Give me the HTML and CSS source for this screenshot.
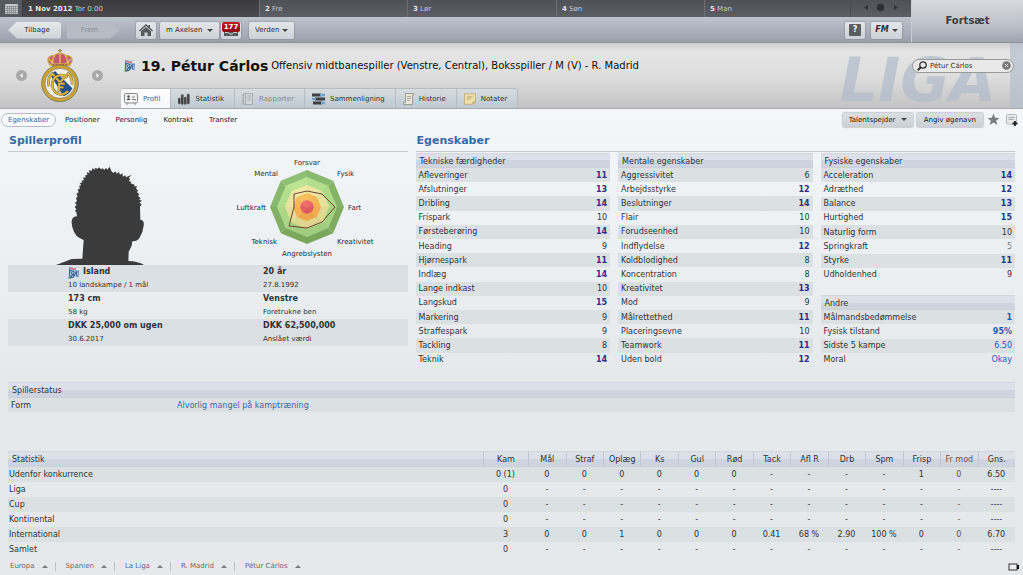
FILE: index.html
```html
<!DOCTYPE html>
<html lang="da">
<head>
    <meta charset="UTF-8">
    <meta name="viewport" content="width=device-width, initial-scale=1.0">
    <title>Pétur Cárlos - Profil</title>
    <link rel="stylesheet" href="styles.css">
</head>
<body>

    <header class="top">
        <div class="days">
            <button class="calendar" aria-label="Kalender">
                <svg width="13" height="10" viewBox="0 0 13 10"><rect width="13" height="10" rx="1" fill="#c3c5c7"/><path d="M0 2.5h13M0 4.5h13M0 6.5h13M0 8.5h13M2.5 2v8M4.5 2v8M6.5 2v8M8.5 2v8M10.5 2v8" stroke="#777a7e" stroke-width=".6"/></svg>
            </button>
            <div class="day today"><b>1 Nov 2012</b> Tor 0:00</div>
            <div class="day"><b>2</b> Fre</div>
            <div class="day"><b>3</b> Lør</div>
            <div class="day"><b>4</b> Søn</div>
            <div class="day"><b>5</b> Man</div>
            <div class="day-nav">
                <svg width="36" height="9" viewBox="0 0 36 9" fill="#2e3033"><path d="M5 2v5L1 4.500z"/><circle cx="17.500" cy="4.500" r="3.700"/><path d="M31 2v5l4-2.500z"/></svg>
            </div>
        </div>
        <nav class="toolbar">
            <button class="arrow-btn back">Tilbage</button>
            <button class="arrow-btn forward" disabled>Frem</button>
            <button class="btn square home" aria-label="Hjem">
                <svg width="14" height="12" viewBox="0 0 14 12"><path d="M7 0l2.500 2.300V1H11v2.700L14 6.500l-.9.9L7 2 .9 7.400 0 6.500z" fill="#55585c"/><path d="M7 3l5 4.300V12H8.500V8.500h-3V12H2V7.300z" fill="#55585c"/></svg>
            </button>
            <label class="dropdown manager"><select aria-label="Manager"><option>m Axelsen</option></select></label>
            <button class="btn square inbox" aria-label="Indbakke">
                <svg width="14" height="12" viewBox="0 0 14 12"><path d="M0 6l2-4h10l2 4v6H0z" fill="#55585c"/><path d="M1 8.500h3.500l1 1.500h3l1-1.500H13" stroke="#c8cdd2" fill="none"/></svg>
                <span class="badge">177</span>
            </button>
            <label class="dropdown world"><select aria-label="Verden"><option>Verden</option></select></label>
            <button class="btn square help" aria-label="Hjælp"><span>?</span></button>
            <button class="btn fm" aria-label="FM menu"><i>FM</i><span class="caret"></span></button>
        </nav>
        <button class="continue">Fortsæt</button>
    </header>

    <section class="player">
        <div class="watermark" aria-hidden="true">LIGA</div>
        <div class="club">
            <button class="round" aria-label="Forrige"><svg width="11" height="11" viewBox="0 0 11 11"><circle cx="5.500" cy="5.500" r="5.500" fill="#a9a9a9"/><path d="M6.700 3v5L3.700 5.500z" fill="#eee"/></svg></button>
            <svg class="crest" width="38" height="53" viewBox="0 0 114 159">
                <path d="M57 0v12M51 5h12" stroke="#a08a48" stroke-width="4"/>
                <path d="M28 49C14 30 23 18 41 20c4-9 28-9 32 0 18-2 27 10 13 29z" fill="#c4586b" stroke="#c9a84a" stroke-width="4"/>
                <path d="M57 13v34M41 20q-10 12-3 28M73 20q10 12 3 28M24 30q8 3 9 14M90 30q-8 3-9 14" stroke="#dfbf6a" stroke-width="4" fill="none"/>
                <rect x="27" y="43" width="60" height="8" rx="3" fill="#c9a84a"/><path d="M34 47h46" stroke="#a8445a" stroke-width="4" stroke-dasharray="5 5"/>
                <circle cx="57" cy="103" r="55" fill="#c9a336" stroke="#696348" stroke-width="2"/>
                <circle cx="57" cy="103" r="45" fill="#f2f0e7" stroke="#7d7347" stroke-width="2"/>
                <path d="M28 78l14-12 52 52q-8 18-26 24z" fill="#23508e"/>
                <path d="M24 112q-6-26 10-38l23 26 24-26q14 10 12 34" fill="none" stroke="#6b5725" stroke-width="8"/>
                <path d="M24 112q-6-26 10-38l23 26 24-26q14 10 12 34" fill="none" stroke="#e2bd4c" stroke-width="5.500"/>
                <path d="M79 86a27 29 0 1 0 2 40" fill="none" stroke="#6b5725" stroke-width="8"/>
                <path d="M79 86a27 29 0 1 0 2 40" fill="none" stroke="#e2bd4c" stroke-width="5.500"/>
                <path d="M54 128V104h17M54 115h13" fill="none" stroke="#6b5725" stroke-width="8"/>
                <path d="M54 128V104h17M54 115h13" fill="none" stroke="#e2bd4c" stroke-width="5"/>
            </svg>
            <button class="round" aria-label="Næste"><svg width="11" height="11" viewBox="0 0 11 11"><circle cx="5.500" cy="5.500" r="5.500" fill="#a9a9a9"/><path d="M4.300 3v5l3-2.500z" fill="#eee"/></svg></button>
        </div>
        <div class="title">
            <svg class="flag" width="12" height="13" viewBox="0 0 36 39"><path d="M4 3l14 4L33 3l-2 31-9-4-7 6-13 2z" fill="#2e6199"/><path d="M5 3l13 4 14-4-1 9-12 3-13-4z" fill="#b7c5d9"/><path d="M7 6l11 4 8-2" stroke="#d86c79" stroke-width="4" fill="none"/><circle cx="29" cy="9" r="5" fill="#edf1f5"/><path d="M6 34l2-17h5q5 5-3 8l5 8M25 17q-8-2-7 4 8 4 5 9-4 3-6 0M29 16l-1 15" stroke="#c2d3e5" stroke-width="2.500" fill="none"/></svg>
            <h1>19. Pétur Cárlos</h1>
            <p>Offensiv midtbanespiller (Venstre, Central), Boksspiller / M (V) - R. Madrid</p>
            <label class="search">
                <svg width="10" height="10" viewBox="0 0 10 10" fill="none" stroke="#333"><circle cx="6" cy="4" r="3.200" stroke-width="1.300"/><path d="M3.700 6.300L.7 9.300" stroke-width="2"/></svg>
                <input type="text" value="Pétur Cárlos" aria-label="Søg">
                <svg width="9" height="9" viewBox="0 0 9 9"><circle cx="4.500" cy="4.500" r="4.300" fill="#777"/><path d="M2.800 2.800l3.400 3.400M6.200 2.800L2.800 6.200" stroke="#e6e6e6"/></svg>
            </label>
        </div>
        <nav class="tabs">
            <a href="#" class="tab active"><svg width="14" height="12" viewBox="0 0 14 12"><rect x=".5" y=".5" width="13" height="9.500" rx="1.500" fill="#f4f4f4" stroke="#888"/><path d="M2 11h2M10 11h2" stroke="#888"/><circle cx="4.500" cy="3.500" r="1.200" fill="#444"/><path d="M2.500 7q2-3.500 4 0z" fill="#444"/><path d="M8 4h3M8 6.500h4" stroke="#666" stroke-width=".8"/></svg>Profil</a>
            <a href="#" class="tab"><svg width="12" height="12" viewBox="0 0 12 12"><g fill="#444" stroke="#777" stroke-width=".4"><rect x="0" y="5" width="2.500" height="6" rx="1"/><rect x="3" y="1.500" width="2.500" height="10" rx="1"/><rect x="6" y="4" width="2.500" height="7.500" rx="1"/><rect x="9" y="1" width="2.500" height="10" rx="1"/></g></svg>Statistik</a>
            <a href="#" class="tab disabled"><svg width="12" height="12" viewBox="0 0 12 12"><path d="M1.500.5h9v11h-9z" fill="#d2d7d9" stroke="#a5abae"/><path d="M3.500 1v10M5.500 3h3.500M5.500 5h3.500M5.500 7h3.500M0 2.500h2M0 5h2M0 7.500h2M0 10h2" stroke="#a5abae"/></svg>Rapporter</a>
            <a href="#" class="tab"><svg width="13" height="12" viewBox="0 0 13 12"><path d="M0 2h9M3 6h10M1 10h9" stroke="#3d3f42" stroke-width="3"/><path d="M8 2h5M0 6h4M9 10h4" stroke="#74a3c8" stroke-width="2.400"/></svg>Sammenligning</a>
            <a href="#" class="tab"><svg width="11" height="12" viewBox="0 0 11 12"><path d="M2.500.5h8v1.800h-1V11.500H.5V9.700h2z" fill="#ece9dc" stroke="#8d8b82" stroke-width=".8"/><path d="M4 3.500h4M4 5.500h4M4 7.500h3" stroke="#9a988e" stroke-width=".8"/></svg>Historie</a>
            <a href="#" class="tab"><svg width="12" height="12" viewBox="0 0 12 12"><path d="M.5.800h11v8.500l-2 2H.5z" fill="#efdfae" stroke="#bda771" stroke-width=".8"/><path d="M3 4h5.500M3 6h3.500M9 11V9h2.500" stroke="#a58d57" stroke-width=".8" fill="none"/></svg>Notater</a>
        </nav>
    </section>

    <div class="subnav">
        <a href="#" class="current">Egenskaber</a>
        <a href="#">Positioner</a>
        <a href="#">Personlig</a>
        <a href="#">Kontrakt</a>
        <a href="#">Transfer</a>
        <div class="actions">
            <label class="dropdown scout"><select aria-label="Talentspejder"><option>Talentspejder</option></select></label>
            <button class="btn">Angiv øgenavn</button>
            <button class="icon-btn" aria-label="Favorit"><svg width="13" height="13" viewBox="0 0 13 13"><path d="M6.500.5l1.600 4.200 4.400.2-3.400 2.800 1.200 4.300-3.800-2.500L2.700 12l1.200-4.300L.5 4.900l4.400-.2z" fill="#777c80"/></svg></button>
            <button class="icon-btn" aria-label="Tilføj notat"><svg width="12" height="12" viewBox="0 0 12 12"><rect x=".5" y=".5" width="10" height="9.500" rx="1" fill="#e5e7e8" stroke="#b5b9bb"/><path d="M2.500 3.500h6M2.500 5.500h5" stroke="#a5a9ab"/><path d="M9 7v5M6.500 9.500h5" stroke="#222" stroke-width="1.800"/></svg></button>
        </div>
    </div>

    <main>
        <div class="columns">
            <section class="profile">
                <h2>Spillerprofil</h2>
                <div class="visuals">
                    <svg class="portrait" width="90" height="100" viewBox="165 120 270 300" fill="#3b3b3b"><path d="M168 420L215 402 247 401 251 345 240 340Q228 334 222 320 212 298 216 284 220 274 231 274L229 262 225 258 229 252 224 246 230 240 225 234 231 228 228 220 233 214 229 206 236 202 233 194 240 190 237 183 244 180 239 175 248 172 243 167 252 166 249 158 258 157 254 152 262 149 260 142 269 144 266 136 276 137 276 130 286 134 284 128 293 131 297 127 303 133 308 130 313 135 318 128 322 134 329 125 334 138 340 144 347 139 350 146 357 141 360 149 367 145 369 155 376 151 378 157 395 149 386 159 391 163 386 168 395 171 391 175 404 179 402 184 411 184 408 191 414 196 411 202 418 208 414 213 422 220 417 224 426 227 418 233 425 238 420 245 421 284Q434 285 431 302 429 322 418 340 411 350 397 349L395 362 386 380 385 408Q415 409 432 420Z"/></svg>
                    <svg class="radar" width="197" height="113" viewBox="0 0 197 113">
                        <g transform="translate(97 55)">
                            <g id="rings"></g>
                            <path class="shape" d="M0-16L15-13 28 0 15 15 0 21-18 19-13 0-13-13z"/>
                        </g>
                        <g class="labels">
                            <text x="97" y="13" text-anchor="middle">Forsvar</text>
                            <text x="127" y="24">Fysik</text>
                            <text x="138" y="58">Fart</text>
                            <text x="127" y="92">Kreativitet</text>
                            <text x="97" y="104" text-anchor="middle">Angrebslysten</text>
                            <text x="67" y="92" text-anchor="end">Teknisk</text>
                            <text x="56" y="58" text-anchor="end">Luftkraft</text>
                            <text x="68" y="24" text-anchor="end">Mental</text>
                        </g>
                    </svg>
                </div>
                <div class="facts">
                    <div class="fact"><b><svg class="flag" width="12" height="13" viewBox="0 0 36 39"><path d="M4 3l14 4L33 3l-2 31-9-4-7 6-13 2z" fill="#2e6199"/><path d="M5 3l13 4 14-4-1 9-12 3-13-4z" fill="#b7c5d9"/><path d="M7 6l11 4 8-2" stroke="#d86c79" stroke-width="4" fill="none"/><circle cx="29" cy="9" r="5" fill="#edf1f5"/><path d="M6 34l2-17h5q5 5-3 8l5 8M25 17q-8-2-7 4 8 4 5 9-4 3-6 0M29 16l-1 15" stroke="#c2d3e5" stroke-width="2.500" fill="none"/></svg>Island</b><span>10 landskampe / 1 mål</span></div>
                    <div class="fact"><b>20 år</b><span>27.8.1992</span></div>
                    <div class="fact"><b>173 cm</b><span>58 kg</span></div>
                    <div class="fact"><b>Venstre</b><span>Foretrukne ben</span></div>
                    <div class="fact"><b>DKK 25,000 om ugen</b><span>30.6.2017</span></div>
                    <div class="fact"><b>DKK 62,500,000</b><span>Anslået værdi</span></div>
                </div>
            </section>

            <section class="attributes">
                <h2>Egenskaber</h2>
                <div class="attr-columns">
                    <table class="attr tall">
                        <thead><tr><th colspan="2">Tekniske færdigheder</th></tr></thead>
                        <tbody>
                            <tr><td>Afleveringer</td><td class="high">11</td></tr>
                            <tr><td>Afslutninger</td><td class="high">13</td></tr>
                            <tr><td>Dribling</td><td class="high">14</td></tr>
                            <tr><td>Frispark</td><td>10</td></tr>
                            <tr><td>Førsteberøring</td><td class="high">14</td></tr>
                            <tr><td>Heading</td><td>9</td></tr>
                            <tr><td>Hjørnespark</td><td class="high">11</td></tr>
                            <tr><td>Indlæg</td><td class="high">14</td></tr>
                            <tr><td>Lange indkast</td><td>10</td></tr>
                            <tr><td>Langskud</td><td class="high">15</td></tr>
                            <tr><td>Markering</td><td>9</td></tr>
                            <tr><td>Straffespark</td><td>9</td></tr>
                            <tr><td>Tackling</td><td>8</td></tr>
                            <tr><td>Teknik</td><td class="high">14</td></tr>
                        </tbody>
                    </table>
                    <table class="attr tall">
                        <thead><tr><th colspan="2">Mentale egenskaber</th></tr></thead>
                        <tbody>
                            <tr><td>Aggressivitet</td><td>6</td></tr>
                            <tr><td>Arbejdsstyrke</td><td class="high">12</td></tr>
                            <tr><td>Beslutninger</td><td class="high">14</td></tr>
                            <tr><td>Flair</td><td>10</td></tr>
                            <tr><td>Forudseenhed</td><td>10</td></tr>
                            <tr><td>Indflydelse</td><td class="high">12</td></tr>
                            <tr><td>Koldblodighed</td><td>8</td></tr>
                            <tr><td>Koncentration</td><td>8</td></tr>
                            <tr><td>Kreativitet</td><td class="high">13</td></tr>
                            <tr><td>Mod</td><td>9</td></tr>
                            <tr><td>Målrettethed</td><td class="high">11</td></tr>
                            <tr><td>Placeringsevne</td><td>10</td></tr>
                            <tr><td>Teamwork</td><td class="high">11</td></tr>
                            <tr><td>Uden bold</td><td class="high">12</td></tr>
                        </tbody>
                    </table>
                    <div class="stack">
                        <table class="attr physical">
                            <thead><tr><th colspan="2">Fysiske egenskaber</th></tr></thead>
                            <tbody>
                                <tr><td>Acceleration</td><td class="high">14</td></tr>
                                <tr><td>Adræthed</td><td class="high">12</td></tr>
                                <tr><td>Balance</td><td class="high">13</td></tr>
                                <tr><td>Hurtighed</td><td class="high">15</td></tr>
                                <tr><td>Naturlig form</td><td>10</td></tr>
                                <tr><td>Springkraft</td><td class="low">5</td></tr>
                                <tr><td>Styrke</td><td class="high">11</td></tr>
                                <tr><td>Udholdenhed</td><td>9</td></tr>
                            </tbody>
                        </table>
                        <table class="attr other">
                            <thead><tr><th colspan="2">Andre</th></tr></thead>
                            <tbody>
                                <tr><td>Målmandsbedømmelse</td><td class="info"><b>1</b></td></tr>
                                <tr><td>Fysisk tilstand</td><td class="info"><b>95%</b></td></tr>
                                <tr><td>Sidste 5 kampe</td><td class="info">6.50</td></tr>
                                <tr><td>Moral</td><td class="info">Okay</td></tr>
                            </tbody>
                        </table>
                    </div>
                </div>
            </section>
        </div>

        <table class="status">
            <thead><tr><th colspan="2">Spillerstatus</th></tr></thead>
            <tbody><tr><td>Form</td><td class="note">Alvorlig mangel på kamptræning</td></tr></tbody>
        </table>

        <table class="stats">
            <thead>
                <tr><th>Statistik</th><th class="kam">Kam</th><th>Mål</th><th>Straf</th><th>Oplæg</th><th>Ks</th><th>Gul</th><th>Rød</th><th>Tack</th><th>Afl R</th><th>Drb</th><th>Spm</th><th>Frisp</th><th class="against">Fr mod</th><th>Gns.</th></tr>
            </thead>
            <tbody>
                <tr><td>Udenfor konkurrence</td><td>0 (1)</td><td>0</td><td>0</td><td>0</td><td>0</td><td>0</td><td>0</td><td>-</td><td>-</td><td>-</td><td>-</td><td>1</td><td class="against">0</td><td>6.50</td></tr>
                <tr><td>Liga</td><td>0</td><td>-</td><td>-</td><td>-</td><td>-</td><td>-</td><td>-</td><td>-</td><td>-</td><td>-</td><td>-</td><td>-</td><td class="against">-</td><td>----</td></tr>
                <tr><td>Cup</td><td>0</td><td>-</td><td>-</td><td>-</td><td>-</td><td>-</td><td>-</td><td>-</td><td>-</td><td>-</td><td>-</td><td>-</td><td class="against">-</td><td>----</td></tr>
                <tr><td>Kontinental</td><td>0</td><td>-</td><td>-</td><td>-</td><td>-</td><td>-</td><td>-</td><td>-</td><td>-</td><td>-</td><td>-</td><td>-</td><td class="against">-</td><td>----</td></tr>
                <tr><td>International</td><td>3</td><td>0</td><td>0</td><td>1</td><td>0</td><td>0</td><td>0</td><td>0.41</td><td>68 %</td><td>2.90</td><td>100 %</td><td>0</td><td class="against">0</td><td>6.70</td></tr>
                <tr><td>Samlet</td><td>0</td><td>-</td><td>-</td><td>-</td><td>-</td><td>-</td><td>-</td><td>-</td><td>-</td><td>-</td><td>-</td><td>-</td><td class="against">-</td><td>----</td></tr>
            </tbody>
        </table>
    </main>

    <footer class="crumbs">
        <button>Europa</button>
        <button>Spanien</button>
        <button>La Liga</button>
        <button>R. Madrid</button>
        <button>Pétur Cárlos</button>
        <svg class="screen" width="11" height="8" viewBox="0 0 11 8"><rect x="1" y="1" width="8" height="6" fill="#eee" stroke="#333"/><path d="M10 2v4" stroke="#111" stroke-width="2"/></svg>
    </footer>

    <script>
        // Radar rings, outermost first: radius, light shade, dark shade
        const rings = [
            [37, [143, 192, 118], [122, 167, 92]],
            [30, [187, 229, 146], [160, 206, 126]],
            [22, [240, 236, 168], [222, 213, 142]],
            [14, [250, 190, 92], [238, 168, 76]],
            [7, [240, 108, 108], [220, 88, 98]]
        ];
        const point = (r, i) => {
            const a = i * Math.PI / 4;
            return (r * Math.sin(a)).toFixed(1) + ',' + (-r * Math.cos(a)).toFixed(1);
        };
        let html = '';
        rings.forEach(([r, light, dark]) => {
            for (let i = 0; i < 8; i++) {
                // the lower right of the disc is in shade
                const t = [0.25, 0.5, 0.8, 1, 1, 0.6, 0.3, 0][i];
                const c = light.map((v, n) => Math.round(v + (dark[n] - v) * t));
                html += `<polygon points="0,0 ${point(r, i)} ${point(r, i + 1)}" fill="rgb(${c})"/>`;
            }
        });
        document.getElementById('rings').innerHTML = html;
    </script>
</body>
</html>
```
FILE: styles.css
```css
* {
    box-sizing: border-box;
}

body {
    margin: 0;
    min-height: 100vh;
    display: flex;
    flex-direction: column;
    font-family: "DejaVu Sans", sans-serif;
    font-size: 8px;
    line-height: 10px;
    color: #303436;
    background: linear-gradient(#f3f7fa 110px, #e5e9ec 380px);
}

h1, h2, p {
    margin: 0;
}

a {
    color: inherit;
    text-decoration: none;
}

button, select, input {
    margin: 0;
    padding: 0;
    border: 0;
    background: none;
    color: inherit;
    font: inherit;
}

svg {
    display: block;
    flex: none;
}

.top, .player, .subnav, .crumbs, .labels {
    font-size: 7px;
}

/* Date bar and toolbar */
.top {
    display: grid;
    grid-template-columns: 1fr 112px;
    grid-template-rows: 17px 26px;
    color: #2d3033;
}

.days {
    display: grid;
    grid-template-columns: 22px 237fr 148fr 149fr 148fr 146fr 61px;
    background: linear-gradient(#4e5156, #5b5f66);
    color: #c6c8ca;
}

.calendar {
    display: flex;
    align-items: center;
    justify-content: center;
    background: #555a61;
}

.day {
    padding: 4px 5px;
    border-left: 1px solid #6b6e73;
}

.day b {
    color: #e4e4e4;
}

.today {
    background: linear-gradient(#3c3c3e, #4a4a4c);
    border-left-color: #3c3c3e;
}

.day-nav {
    display: flex;
    justify-content: center;
    padding-top: 3px;
    border-left: 1px solid #46494d;
}

.toolbar {
    display: flex;
    align-items: center;
    padding: 1px 9px 0 8px;
    background: linear-gradient(#bec4cd, #9aa1ac);
    border-bottom: 1px solid #8b929b;
}

.continue {
    grid-area: 1 / 2 / 3 / 3;
    background: linear-gradient(#d7dade, #bdc1c9 60%, #9ea5b0);
    border-left: 1px solid #c9ced4;
    border-bottom: 1px solid #8b929b;
    color: #3c3f43;
    font-size: 10px;
    font-weight: bold;
}

.btn, .dropdown {
    display: flex;
    align-items: center;
    justify-content: center;
    height: 17px;
    padding: 0 6px;
    border-radius: 2px;
    background: linear-gradient(#e3e6e9, #cdd2d7);
    box-shadow: 0 0 1px 1px rgba(120, 128, 138, 0.35);
}

.square {
    width: 20px;
    padding: 0;
}

.arrow-btn {
    height: 17px;
    width: 53px;
    background: linear-gradient(#e6e8eb, #ced3d8);
}

.back {
    padding-left: 5px;
    border-radius: 3px;
    clip-path: polygon(0 50%, 9px 0, 100% 0, 100% 100%, 9px 100%);
}

.forward {
    margin-left: 6px;
    padding-right: 8px;
    background: #b5bcc4;
    color: #868d94;
    clip-path: polygon(0 0, 43px 0, 100% 50%, 43px 100%, 0 100%);
}

.home {
    margin-left: 16px;
}

.dropdown {
    position: relative;
}

.dropdown select {
    appearance: none;
    width: 100%;
}

.dropdown::after, .caret {
    content: "";
    flex: none;
    border: 3px solid transparent;
    border-top: 3px solid #444;
    border-bottom: 0;
}

.manager {
    width: 59px;
    margin: 0 2px 0 4px;
}

.world {
    width: 45px;
    margin-left: 8px;
}

.inbox {
    position: relative;
}

.badge {
    position: absolute;
    top: 0;
    left: 1px;
    width: 18px;
    height: 10px;
    border-radius: 2px;
    background: linear-gradient(#c01d22, #8d090e);
    color: #fff;
    font-weight: bold;
}

.help {
    margin-left: auto;
}

.help span {
    width: 12px;
    height: 12px;
    border-radius: 1px;
    background: #5a5d61;
    color: #fff;
    font-size: 8px;
    font-weight: bold;
    line-height: 12px;
}

.fm {
    width: 31px;
    margin-left: 6px;
    padding: 0 3px;
    gap: 3px;
    font-size: 8px;
    font-weight: bold;
}

/* Player header */
.player {
    position: relative;
    display: grid;
    grid-template-columns: 121px 1fr;
    grid-template-rows: 45px 20px;
    overflow: hidden;
    background: linear-gradient(#cfcfcf, #e5e5e5 9px, #dedede 50%, #c3c3c3);
    border-bottom: 1px solid #aaa;
}

.watermark {
    position: absolute;
    top: 0;
    right: 0;
    height: 100%;
    padding: 12px 14px 0 0;
    border-right: 13px solid #b4bfcd;
    color: #b0bccb;
    font: italic bold 60px/50px "DejaVu Sans", sans-serif;
    opacity: 0.7;
}

.club {
    grid-row: 1 / 3;
    display: flex;
    align-items: center;
    justify-content: space-between;
    padding: 0 18px 0 16px;
}

.title {
    position: relative;
    display: flex;
    align-items: center;
    padding: 0 9px 0 3px;
    color: #111;
}

.title h1 {
    margin: 0 3px 0 5px;
    font-size: 14px;
    line-height: 18px;
}

.title p {
    font-size: 10px;
    line-height: 14px;
}

.search {
    display: flex;
    align-items: center;
    gap: 3px;
    width: 102px;
    height: 14px;
    margin-left: auto;
    padding: 0 2px 0 4px;
    border: 1px solid #999;
    border-radius: 7px;
    background: #e9e9e9;
}

.search input {
    flex: 1;
    min-width: 0;
    color: #333;
}

.tabs {
    position: relative;
    display: flex;
}

.tab {
    display: flex;
    align-items: center;
    gap: 5px;
    padding: 0 10px 0 7px;
    background: linear-gradient(#d5dde1, #bfc9d1);
    border-right: 1px solid #b4bdc4;
    border-top: 1px solid #b6bdc2;
}

.tab:first-child {
    padding-left: 3px;
    border-radius: 3px 0 0 0;
}

.tab:last-child {
    border-radius: 0 4px 0 0;
}

.tab.active {
    background: linear-gradient(#fdfdfe, #f5f7fa);
    color: #3568a4;
}

.tab.disabled {
    color: #858b8e;
}

/* Sub navigation */
.subnav {
    display: flex;
    align-items: center;
    height: 21px;
    padding: 0 5px 0 1px;
    gap: 16px;
    color: #222;
}

.subnav .current {
    height: 14px;
    margin-right: -7px;
    padding: 1px 6px;
    border: 1px solid #b5bcc5;
    border-radius: 7px;
    background: #f9fbfd;
    color: #3568a4;
}

.actions {
    display: flex;
    align-items: center;
    gap: 4px;
    margin-left: auto;
}

.actions .btn, .actions .dropdown {
    height: 14px;
    background: linear-gradient(#d9dfe2, #cbd1d5);
}

.actions .btn {
    padding: 0 7px;
}

.scout {
    width: 70px;
}

.icon-btn + .icon-btn {
    margin-left: 2px;
}

/* Content */
main {
    padding: 0 8px;
}

.columns {
    display: grid;
    grid-template-columns: 2fr 3fr;
    gap: 8px;
}

h2 {
    height: 22px;
    padding: 4px 1px;
    border-bottom: 1px solid #c6cbd0;
    color: #3a6aa5;
    font-size: 11px;
    line-height: 14px;
}

.visuals {
    display: grid;
    grid-template-columns: 202px 1fr;
    align-items: end;
}

.portrait {
    margin-left: 47px;
}

.shape {
    fill: none;
    stroke: #6b4335;
}

.labels {
    fill: #282c2e;
}

.facts {
    display: grid;
    grid-template-columns: 195px 1fr;
}

.fact {
    display: flex;
    flex-direction: column;
    gap: 3px;
    height: 27px;
    padding: 2px 0 0 60px;
    font-size: 7px;
}

.fact b {
    display: flex;
    align-items: center;
    gap: 3px;
    height: 10px;
    font-size: 8px;
}

.fact:nth-child(4n + 1), .fact:nth-child(4n + 2) {
    background: #dae0e4;
}

table {
    width: 100%;
    border-spacing: 0;
}

th, td {
    padding: 0 3px;
    text-align: left;
}

th {
    height: 15px;
    background: linear-gradient(#dbe0e9 50%, #cfd5e0 50%);
    border-top: 1px solid #d3d7df;
    border-bottom: 1px solid #ccd1d9;
    font-weight: normal;
}

tbody tr:nth-child(odd) {
    background: #dbe0e3;
}

.attr-columns {
    display: grid;
    grid-template-columns: repeat(3, 1fr);
    gap: 8px;
    margin-top: 1px;
}

.attr th {
    padding: 3px 4px 0;
}

.attr td {
    padding-top: 1px;
}

.attr td:last-child {
    text-align: right;
}

.tall {
    height: 214px;
}

.physical {
    height: 129px;
}

.other {
    height: 72px;
    margin-top: 13px;
}

.attr .high {
    color: #2f2f85;
    font-weight: bold;
}

.attr .low {
    color: #7b8083;
}

.attr .info {
    color: #1c5cb8;
}

.status {
    margin-top: 15px;
}

.status th {
    height: 16px;
    padding: 1px 4px 0;
}

.status td {
    height: 14px;
    padding-top: 1px;
}

.status td:first-child {
    width: 166px;
}

.status .note {
    color: #3a6aa5;
}

.stats {
    margin-top: 39px;
    table-layout: fixed;
    line-height: 11px;
}

.stats th {
    height: 16px;
    width: 3.72%;
    border-left: 1px solid #c3c9d2;
}

.stats th:first-child {
    width: auto;
    border-left: 0;
}

.stats .kam {
    width: 4.5%;
}

.stats th, .stats td {
    padding: 0;
    text-align: center;
}

.stats td {
    height: 15px;
}

.stats td:first-child, .stats th:first-child {
    padding: 0 1px;
    text-align: left;
}

.stats th:first-child {
    padding-left: 4px;
}

.stats .against {
    color: #6a5344;
}

/* Breadcrumbs */
.crumbs {
    display: flex;
    align-items: center;
    height: 19px;
    padding-right: 4px;
    color: #666c70;
}

.crumbs button {
    display: flex;
    align-items: center;
    gap: 7px;
    padding: 0 7px 0 10px;
    line-height: 9px;
    border-right: 1px solid #bcc2c6;
}

.crumbs button:last-of-type {
    border-right: 0;
}

.crumbs button::after {
    content: "";
    border: 3px solid transparent;
    border-bottom: 3px solid #777d81;
    border-top: 0;
}

.screen {
    margin-left: auto;
}
```
